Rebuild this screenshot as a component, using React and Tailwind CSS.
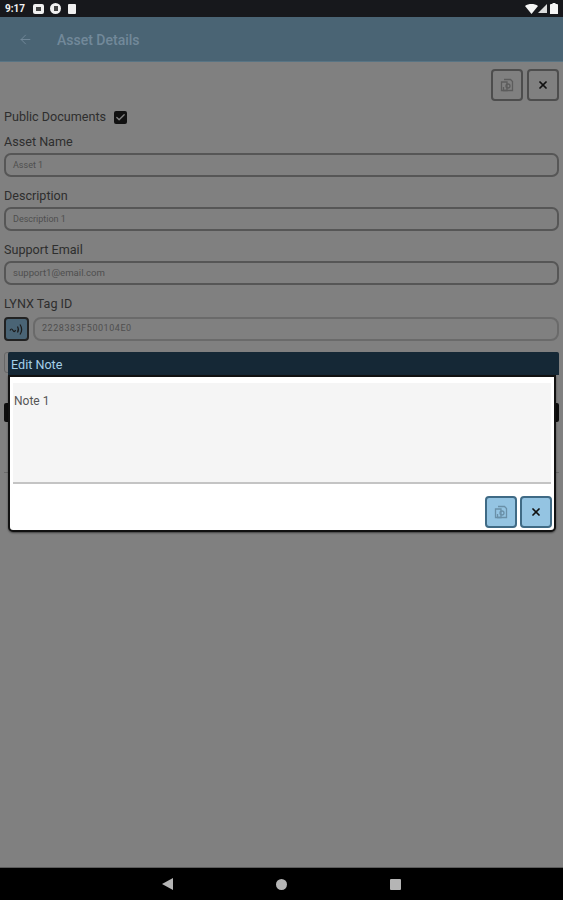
import React from 'react';
import { ArrowLeft, X, Check } from 'lucide-react';

const SaveIcon = ({ color = '#555' }) => (
    <svg width="14" height="14" viewBox="0 0 14 14" fill="none" stroke={color} strokeWidth="1.3">
        <path d="M4 1.5h6.5l2 2v9h-9V9" />
        <path d="M1.5 4h5.5v8.5H1.5z" />
        <circle cx="8" cy="8" r="2" />
    </svg>
);

const NfcIcon = () => (
    <svg width="15" height="13" viewBox="0 0 15 13" fill="none" stroke="#1c1c1c" strokeWidth="1.2">
        <path d="M1 7.5c1-2 2-2 3 0s2 1 2.5-.5" />
        <path d="M8.5 3.5c1.2 2 1.2 4 0 6" />
        <path d="M11 1.5c2 3 2 7 0 10" />
    </svg>
);

const Field = ({ label, value, textClass = 'text-[9px]' }) => (
    <div className="flex flex-col">
        <div className="text-[12.6px] leading-[16px] text-[#2e2e2e] h-[16px]">{label}</div>
        <div className={`mt-[3px] h-[24px] border-2 border-[#565656] rounded-[7px] flex items-center pl-[7px] pt-[1px] text-[#4f4f4f] ${textClass}`}>{value}</div>
    </div>
);

const SquareButton = ({ className, children }) => (
    <div className={`w-[32px] h-[32px] rounded-[4px] border-2 flex items-center justify-center ${className}`}>{children}</div>
);

export default function App() {
    return (
        <div className="relative w-[563px] h-[900px] flex flex-col bg-[#808080] overflow-hidden font-['Roboto',sans-serif]">
            {/* Status bar */}
            <div className="h-[17px] bg-[#17181c] flex items-center justify-between pl-[5px] pr-[5px]">
                <div className="flex items-center">
                    <span className="w-[28px] text-[10px] font-bold text-[#f2f2f2]">9:17</span>
                    <div className="w-[11px] h-[10px] rounded-[2px] bg-[#f0f0f0] flex items-center justify-center">
                        <div className="w-[5px] h-[4px] bg-[#444]" />
                    </div>
                    <div className="ml-[6px] w-[11px] h-[11px] rounded-full bg-[#f0f0f0] flex items-center justify-center">
                        <div className="w-[4px] h-[5px] bg-[#444]" />
                    </div>
                    <div className="ml-[7px] w-[8px] h-[10px] rounded-[1px] bg-[#f0f0f0]" />
                </div>
                <div className="flex items-center">
                    <svg width="13" height="10" viewBox="0 0 13 10"><path d="M0 2C3.5-.6 9.5-.6 13 2L6.5 10z" fill="#f5f5f5" /></svg>
                    <svg width="9" height="9" viewBox="0 0 9 9"><path d="M0 9L9 0v9z" fill="#dcdcdc" /></svg>
                    <svg width="8" height="11" viewBox="0 0 8 11" className="ml-[3px]"><path d="M2.5 0h3v1H7a1 1 0 0 1 1 1v9H0V2a1 1 0 0 1 1-1h1.5z" fill="#f5f5f5" /></svg>
                </div>
            </div>

            {/* App bar */}
            <div className="h-[45px] bg-[#4a6474] border-b border-[#587484] flex items-center pl-[18px]">
                <ArrowLeft size={15} strokeWidth={1.5} color="#72899a" />
                <span className="ml-[24px] pt-[3px] text-[14px] font-medium text-[#72899a]">Asset Details</span>
            </div>

            {/* Page behind the dialog */}
            <div className="flex-1 px-[4px] flex flex-col">
                <div className="flex justify-end gap-[4px] pt-[7px]">
                    <SquareButton className="border-[#4d4d4d]"><SaveIcon color="#5c5c5c" /></SquareButton>
                    <SquareButton className="border-[#4d4d4d]"><X size={12} strokeWidth={3.5} color="#111" /></SquareButton>
                </div>
                <div className="flex items-center mt-[8px] h-[16px]">
                    <span className="text-[12.6px] text-[#2e2e2e]">Public Documents</span>
                    <div className="ml-[8px] w-[13px] h-[13px] bg-[#111] rounded-[2px] flex items-center justify-center">
                        <Check size={11} strokeWidth={3} color="#808080" />
                    </div>
                </div>
                <div className="mt-[9px] flex flex-col gap-[11px]">
                    <Field label="Asset Name" value="Asset 1" />
                    <Field label="Description" value="Description 1" />
                    <Field label="Support Email" value="support1@email.com" textClass="text-[9.6px]" />
                </div>
                <div className="mt-[11px] text-[12.6px] leading-[16px] text-[#2e2e2e]">LYNX Tag ID</div>
                <div className="mt-[5px] flex gap-[4px]">
                    <div className="w-[25px] h-[24px] rounded-[4px] border-2 border-[#222] bg-[#4a6475] flex items-center justify-center">
                        <NfcIcon />
                    </div>
                    <div className="flex-1 h-[24px] border-2 border-[#6a6a6a] rounded-[8px] flex items-center pl-[7px] text-[9px] tracking-[0.55px] text-[#4f4f4f]">2228383F500104E0</div>
                </div>
                <div className="mt-[11px] h-[21px] border border-[#666] rounded-[3px]" />
                <div className="mt-[30px] h-[19px] bg-[#0d0d0d] rounded-[2px]" />
                <div className="mt-[50px] border-t border-[#6a6a6a]" />
            </div>

            {/* Nav bar */}
            <div className="h-[33px] bg-black flex items-center justify-center border-t border-[#5a5a5a]">
                <div className="w-[239px] flex items-center justify-between">
                    <svg width="11" height="12" viewBox="0 0 11 12"><path d="M11 0v12L0 6z" fill="#b5b5b5" /></svg>
                    <div className="w-[11px] h-[11px] rounded-full bg-[#b5b5b5]" />
                    <div className="w-[11px] h-[11px] rounded-[1px] bg-[#b5b5b5]" />
                </div>
            </div>

            {/* Edit Note dialog */}
            <div className="absolute left-[8px] top-[352px] w-[551px] flex flex-col">
                <div className="h-[23px] bg-[#152836] rounded-t-[2px] flex items-center pl-[3px] pt-[3px] text-[12.6px] text-[#a5cfe8]">Edit Note</div>
                <div className="w-[548px] h-[157px] bg-white border-2 border-[#111] rounded-b-[5px] flex flex-col shadow-[0_1px_2px_rgba(0,0,0,0.5)]">
                    <div className="mt-[6px] h-[101px] bg-[#f5f5f5] border-b-2 border-[#c4c4c4] mx-[3px] pl-[1px] pt-[9px] text-[12px] text-[#555]">Note 1</div>
                    <div className="flex-1 flex justify-end items-end gap-[3px] pr-[2px] pb-[2px]">
                        <SquareButton className="bg-[#94c4e2] border-[#3f6a85]"><SaveIcon color="#6a90a8" /></SquareButton>
                        <SquareButton className="bg-[#94c4e2] border-[#3f6a85]"><X size={12} strokeWidth={3.5} color="#111" /></SquareButton>
                    </div>
                </div>
            </div>
        </div>
    );
}
